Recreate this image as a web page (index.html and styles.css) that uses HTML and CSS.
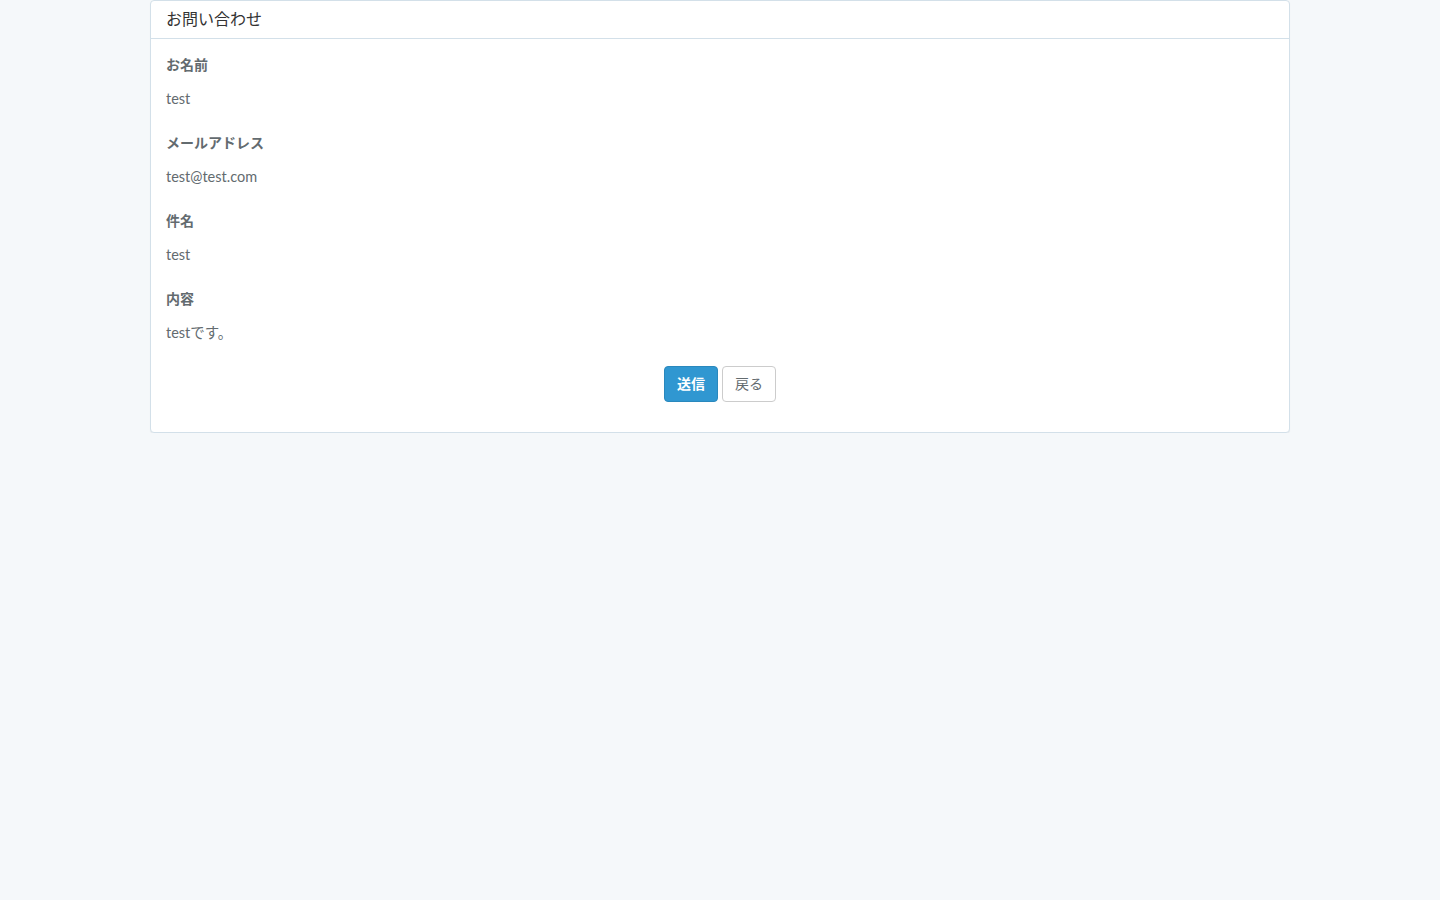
FILE: index.html
```html
<!DOCTYPE html>
<html lang="ja">
<head>
  <meta charset="UTF-8">
  <title>お問い合わせ</title>
  <link rel="stylesheet" href="styles.css">
</head>
<body>

  <div class="container">
    <div class="panel">
      <div class="panel-heading">お問い合わせ</div>

      <div class="panel-body">
        <div class="form-group">
          <label>お名前</label>
          <p class="static">test</p>
        </div>
        <div class="form-group">
          <label>メールアドレス</label>
          <p class="static">test@test.com</p>
        </div>
        <div class="form-group">
          <label>件名</label>
          <p class="static">test</p>
        </div>
        <div class="form-group">
          <label>内容</label>
          <p class="static">testです。</p>
        </div>

        <div class="form-group actions">
          <button class="btn btn-primary">送信</button>
          <button class="btn btn-default">戻る</button>
        </div>
      </div>
    </div>
  </div>

</body>
</html>
```

FILE: styles.css
```css
body {
  background-color: #f5f8fa;
  color: #636b6f;
  font-family: Lato, "Noto Sans CJK JP", sans-serif;
  font-size: 14px;
  line-height: 22px;
  margin: 0;
  padding: 0;
}

.container {
  width: 1140px;
  margin: 0 auto;
}

.panel {
  background-color: #fff;
  border: 1px solid #d3e0e9;
  border-radius: 4px;
  box-shadow: 0 1px 1px rgba(0, 0, 0, 0.05);
}

.panel-heading {
  color: #333;
  font-size: 16px;
  padding: 6px 15px 8px;
  line-height: 23px;
  border-bottom: 1px solid #d3e0e9;
}

.panel-body {
  padding: 15px 15px 0;
}

.form-group {
  margin-bottom: 16px;
}

label {
  display: block;
  font-weight: bold;
  margin-bottom: 4px;
}

.static {
  margin: 0;
  padding: 8px 0 6px;
  font-size: 14.5px;
}

.actions {
  display: flex;
  justify-content: center;
  gap: 4px;
  margin-bottom: 30px;
}

.btn {
  font-family: inherit;
  font-size: 14px;
  line-height: 22px;
  padding: 6px 12px;
  border-radius: 4px;
  border: 1px solid transparent;
  cursor: pointer;
}

.btn-primary {
  background-color: #3097d1;
  border-color: #2a88bd;
  color: #fff;
  font-weight: bold;
}

.btn-default {
  background-color: #fff;
  border-color: #ccc;
  color: #636b6f;
}
```
